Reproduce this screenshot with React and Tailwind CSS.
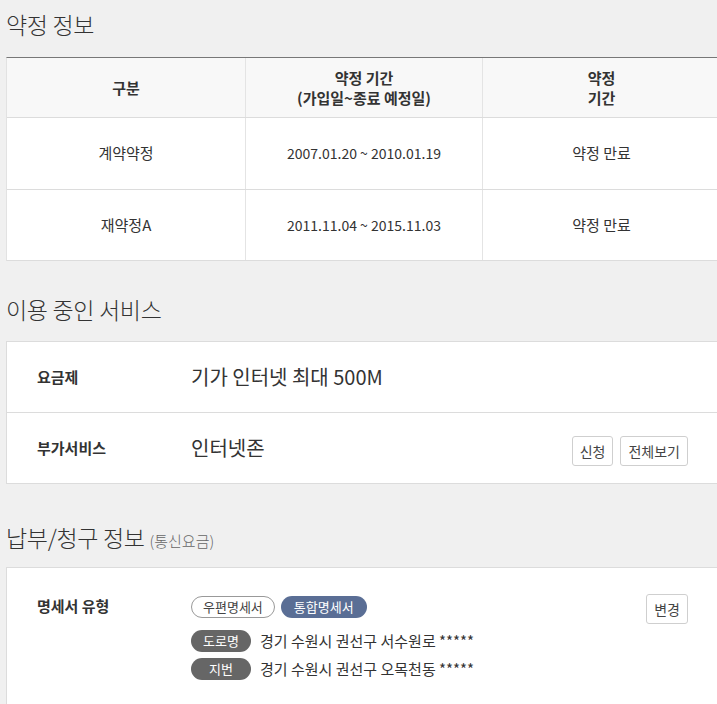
const font = { fontFamily: '"Noto Sans CJK KR", "Noto Sans", sans-serif' };

const contracts = [
  { type: "계약약정", period: "2007.01.20 ~ 2010.01.19", status: "약정 만료" },
  { type: "재약정A", period: "2011.11.04 ~ 2015.11.03", status: "약정 만료" },
];

const SmallButton = ({ children }) => (
  <button className="h-[30px] px-[7px] border border-[#cfcfcf] rounded-[3px] bg-white text-[14px] text-[#444] leading-none">
    {children}
  </button>
);

const App = () => {
  return (
    <div className="min-h-[704px] w-full overflow-hidden bg-[#f0f0f0] text-[#333]" style={font}>
      <div className="w-[713px] ml-[6px]">
        {/* 약정 정보 */}
        <h2 className="h-[30px] mt-[9px] text-[23px] leading-[30px] font-light tracking-[-0.3px]">약정 정보</h2>
        <div className="mt-[18px] border-t border-[#777] border-l border-l-[#e2e2e2] bg-white border-b border-b-[#dcdcdc]">
          <div className="grid grid-cols-[238px_237px_238px] h-[60px] bg-[#f8f8f8] border-b border-[#dcdcdc]">
            <div className="flex items-center justify-center text-[15px] font-bold leading-[20px]">구분</div>
            <div className="flex flex-col items-center justify-center text-[15px] font-bold leading-[20px] border-l border-[#e4e4e4]">
              <span>약정 기간</span>
              <span>(가입일~종료 예정일)</span>
            </div>
            <div className="flex flex-col items-center justify-center text-[15px] font-bold leading-[20px] border-l border-[#e4e4e4]">
              <span>약정</span>
              <span>기간</span>
            </div>
          </div>
          {contracts.map((c, i) => (
            <div
              key={c.type}
              className={`grid grid-cols-[238px_237px_238px] h-[71px] ${i > 0 ? "border-t border-[#dcdcdc]" : ""}`}
            >
              <div className="flex items-center justify-center text-[15px]">{c.type}</div>
              <div className="flex items-center justify-center text-[14px] border-l border-[#e4e4e4]">{c.period}</div>
              <div className="flex items-center justify-center text-[15px] border-l border-[#e4e4e4]">{c.status}</div>
            </div>
          ))}
        </div>

        {/* 이용 중인 서비스 */}
        <h2 className="h-[30px] mt-[33px] text-[23px] leading-[30px] font-light tracking-[-0.3px]">이용 중인 서비스</h2>
        <div className="mt-[17px] bg-white border border-[#dcdcdc]">
          <div className="flex items-center h-[70px] pl-[30px]">
            <span className="w-[154px] text-[15px] font-bold">요금제</span>
            <span className="text-[20px]">기가 인터넷 최대 500M</span>
          </div>
          <div className="flex items-center h-[71px] pl-[30px] pr-[30px] border-t border-[#dcdcdc]">
            <span className="w-[154px] text-[15px] font-bold">부가서비스</span>
            <span className="text-[20px] flex-1">인터넷존</span>
            <div className="flex gap-[7px] mt-[6px]">
              <SmallButton>신청</SmallButton>
              <SmallButton>전체보기</SmallButton>
            </div>
          </div>
        </div>

        {/* 납부/청구 정보 */}
        <h2 className="h-[30px] mt-[38px] text-[23px] leading-[30px] font-light tracking-[-0.3px]">
          납부/청구 정보 <span className="text-[15px] text-[#666] tracking-normal">(통신요금)</span>
        </h2>
        <div className="mt-[15px] bg-white border border-[#dcdcdc] h-[160px] pl-[30px] pr-[30px] pt-[26px] flex">
          <span className="w-[154px] text-[15px] font-bold leading-[24px]">명세서 유형</span>
          <div className="flex-1 flex flex-col">
            <div className="flex gap-[6px] items-center h-[22px] mt-[2px]">
              <span className="h-[22px] px-[11px] rounded-full border border-[#999] text-[13px] text-[#444] flex items-center">우편명세서</span>
              <span className="h-[22px] px-[13px] rounded-full bg-[#5a6e95] text-[13px] text-white flex items-center">통합명세서</span>
            </div>
            <div className="flex items-center gap-[9px] mt-[12px] h-[22px]">
              <span className="w-[60px] h-[22px] rounded-full bg-[#666] text-white text-[13px] flex items-center justify-center">도로명</span>
              <span className="text-[15px] text-[#333]">경기 수원시 권선구 서수원로 *****</span>
            </div>
            <div className="flex items-center gap-[9px] mt-[6px] h-[22px]">
              <span className="w-[60px] h-[22px] rounded-full bg-[#666] text-white text-[13px] flex items-center justify-center">지번</span>
              <span className="text-[15px] text-[#333]">경기 수원시 권선구 오목천동 *****</span>
            </div>
          </div>
          <div>
            <SmallButton>변경</SmallButton>
          </div>
        </div>
      </div>
    </div>
  );
};

export default App;
